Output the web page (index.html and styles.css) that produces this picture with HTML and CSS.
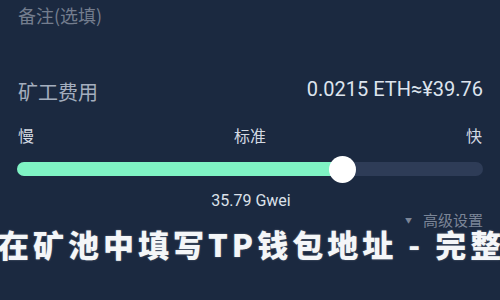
FILE: index.html
```html
<!DOCTYPE html>
<html lang="zh-CN">
<head>
<meta charset="utf-8">
<title>矿工费用</title>
<link rel="stylesheet" href="styles.css">
</head>
<body>
<main class="page">
  <div class="remark">备注(选填)</div>
  <div class="fee-row">
    <span class="fee-label">矿工费用</span>
    <span class="fee-value">0.0215 ETH≈¥39.76</span>
  </div>
  <div class="speed-labels">
    <span>慢</span>
    <span>标准</span>
    <span>快</span>
  </div>
  <div class="slider">
    <div class="slider-fill" style="width:70%">
      <span class="slider-knob"></span>
    </div>
  </div>
  <div class="gwei">35.79 Gwei</div>
  <div class="advanced"><span class="caret">▼</span>高级设置</div>
</main>
<h1 class="caption">在矿池中填写TP钱包地址 - 完整指南</h1>
</body>
</html>
```
FILE: styles.css
```css
* { box-sizing: border-box; }
html, body {
  margin: 0;
  width: 500px;
  height: 300px;
  overflow: hidden;
  background: #1b2940;
}
body {
  position: relative;
  font-family: "Noto Sans CJK SC", "Noto Sans", sans-serif;
}
.page {
  padding: 5px 17px 0 17px;
  display: flex;
  flex-direction: column;
}
.remark {
  font-size: 18px;
  line-height: 20px;
  color: #747d8e;
  padding-left: 1px;
}
.fee-row {
  margin-top: 55px;
  height: 24px;
  display: flex;
  justify-content: space-between;
  align-items: center;
}
.fee-label {
  font-size: 20px;
  line-height: 24px;
  color: #a4aebe;
  padding-left: 1px;
}
.fee-value {
  font-family: Roboto, "Liberation Sans", sans-serif;
  font-size: 20px;
  line-height: 24px;
  color: #dde4ee;
  margin-bottom: 6px;
}
.speed-labels {
  margin-top: 21px;
  display: flex;
  justify-content: space-between;
  font-size: 16px;
  line-height: 20px;
  color: #d3d9e2;
  padding: 0 1px;
}
.slider {
  margin-top: 17px;
  height: 14px;
  border-radius: 7px;
  background: #2e3c57;
  display: flex;
}
.slider-fill {
  position: relative;
  height: 100%;
  border-radius: 7px 0 0 7px;
  background: #7ff3c4;
}
.slider-knob {
  position: absolute;
  right: -13px;
  top: -6px;
  width: 27px;
  height: 27px;
  border-radius: 50%;
  background: #ffffff;
}
.gwei {
  margin-top: 15px;
  text-align: center;
  font-family: Roboto, "Liberation Sans", sans-serif;
  font-size: 16px;
  line-height: 20px;
  color: #dbe1ea;
  padding-left: 2px;
}
.advanced {
  margin-top: 1px;
  align-self: flex-end;
  font-size: 15px;
  line-height: 16px;
  color: #7b8597;
  display: flex;
  align-items: center;
}
.caret {
  font-size: 7px;
  margin-right: 11px;
}
.caption {
  position: absolute;
  left: -2px;
  top: 229px;
  margin: 0;
  white-space: nowrap;
  font-size: 31px;
  line-height: 30px;
  font-weight: 900;
  letter-spacing: 4px;
  color: #f4f6f8;
  text-shadow: 0 0 2px rgba(255,255,255,0.35);
}
```
